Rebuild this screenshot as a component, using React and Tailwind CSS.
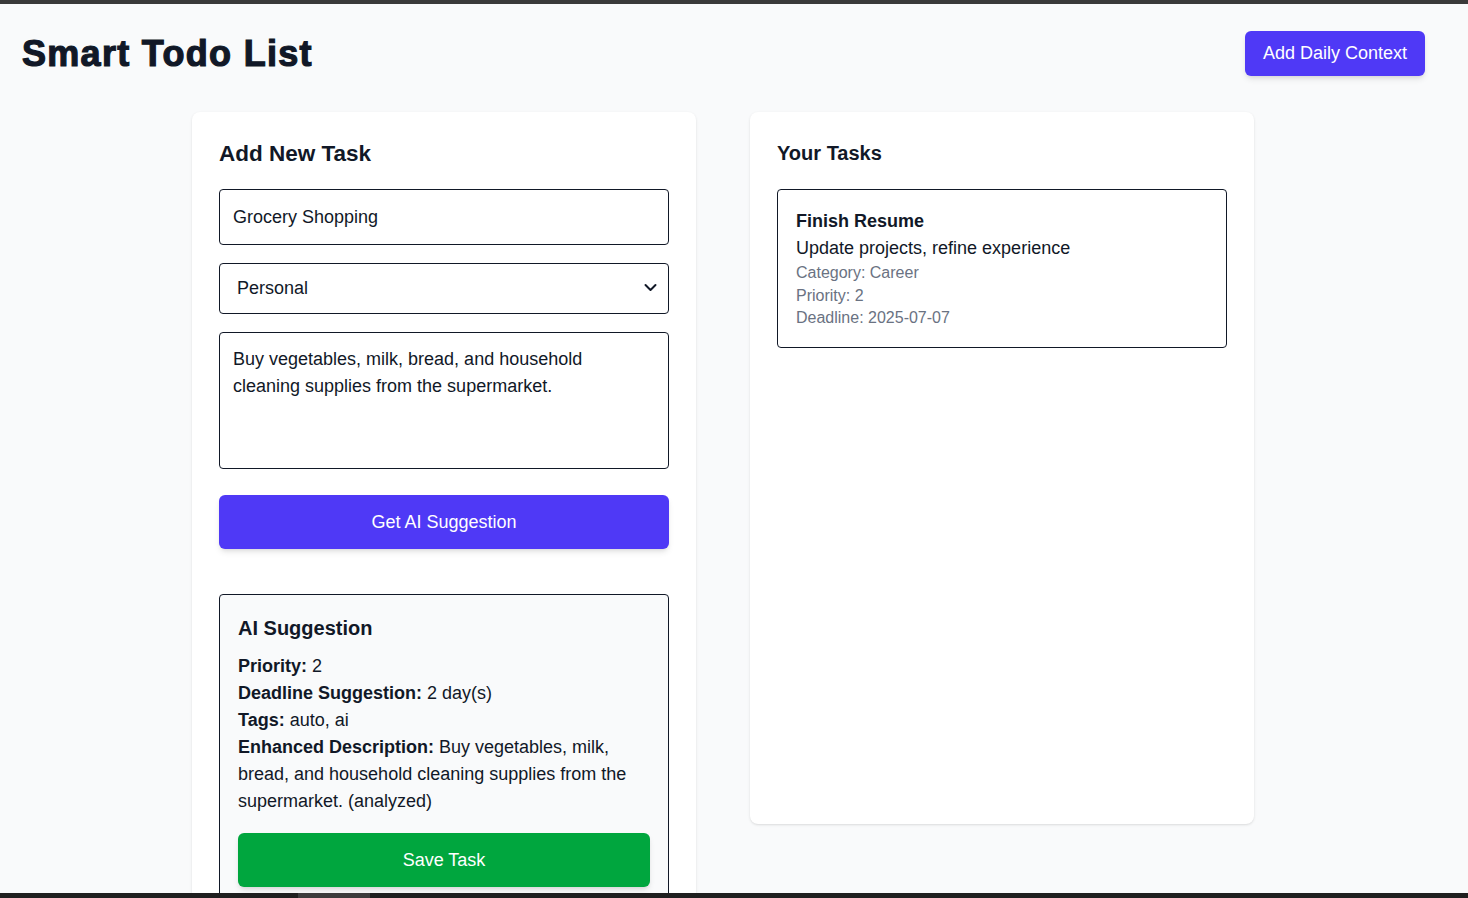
import React, { useState } from "react";

const App = () => {
  const [title, setTitle] = useState("Grocery Shopping");
  const [category, setCategory] = useState("Personal");
  const [description, setDescription] = useState(
    "Buy vegetables, milk, bread, and household cleaning supplies from the supermarket."
  );

  const tasks = [
    {
      title: "Finish Resume",
      description: "Update projects, refine experience",
      category: "Career",
      priority: 2,
      deadline: "2025-07-07",
    },
  ];

  return (
    <div className="min-h-screen bg-[#f9fafb] font-['Liberation_Sans',Arial,sans-serif] text-[#111827]">
      <div className="h-[4px] bg-[#3a3a3a]"></div>

      <header className="flex items-center justify-between pl-[22px] pr-[43px] pt-[27px]">
        <h1 className="text-[36px] leading-[40px] font-bold tracking-[1.3px] [-webkit-text-stroke:1.2px_#111827]">
          Smart Todo List
        </h1>
        <button className="h-[45px] px-[18px] rounded-md bg-[#4f39f6] text-white text-[18px] shadow-md">
          Add Daily Context
        </button>
      </header>

      <main className="flex items-start gap-[54px] ml-[192px] mt-[36px] pb-10">
        {/* add task */}
        <section className="w-[504px] bg-white rounded-lg shadow-sm pt-[26px] px-[27px] pb-6">
          <h2 className="text-[22.5px] leading-[32px] font-bold mb-[19px]">Add New Task</h2>
          <input
            value={title}
            onChange={(e) => setTitle(e.target.value)}
            className="block w-full h-[56px] px-[13px] border border-[#111827] rounded text-[18px] outline-none"
          />
          <div className="relative mt-[18px]">
            <select
              value={category}
              onChange={(e) => setCategory(e.target.value)}
              className="block w-full h-[51px] px-[17px] border border-[#111827] rounded text-[18px] bg-white outline-none appearance-none"
            >
              <option>Personal</option>
              <option>Work</option>
              <option>Career</option>
            </select>
            <svg
              className="absolute right-[12px] top-[20px] pointer-events-none"
              width="13"
              height="9"
              viewBox="0 0 13 9"
              fill="none"
            >
              <path d="M1.5 2l5 5 5-5" stroke="#111827" strokeWidth="2" strokeLinecap="round" strokeLinejoin="round" />
            </svg>
          </div>
          <textarea
            value={description}
            onChange={(e) => setDescription(e.target.value)}
            className="block w-full h-[137px] mt-[18px] pl-[13px] pr-[20px] pt-[13px] pb-[12px] border border-[#111827] rounded text-[18px] leading-[27px] resize-none outline-none"
          />
          <button className="block w-full h-[54px] mt-[26px] rounded-md bg-[#4f39f6] text-white text-[18px] shadow-md">
            Get AI Suggestion
          </button>

          <div className="mt-[45px] border border-[#111827] rounded bg-[#f9fafb] px-[18px] pt-[18px] pb-[18px]">
            <h3 className="text-[20px] leading-[30px] font-bold mb-[10px]">AI Suggestion</h3>
            <div className="text-[18px] leading-[27px]">
              <p><span className="font-bold">Priority:</span> 2</p>
              <p><span className="font-bold">Deadline Suggestion:</span> 2 day(s)</p>
              <p><span className="font-bold">Tags:</span> auto, ai</p>
              <p>
                <span className="font-bold">Enhanced Description:</span> Buy vegetables, milk,
                bread, and household cleaning supplies from the supermarket. (analyzed)
              </p>
            </div>
            <button className="block w-full h-[54px] mt-[18px] rounded-md bg-[#00a63e] text-white text-[18px] shadow-md">
              Save Task
            </button>
          </div>
        </section>

        {/* task list */}
        <section className="w-[504px] h-[712px] bg-white rounded-lg shadow-sm pt-[25px] px-[27px]">
          <h2 className="text-[20px] leading-[32px] font-bold mb-[20px]">Your Tasks</h2>
          <div className="flex flex-col gap-3">
            {tasks.map((task, index) => (
              <div key={index} className="border border-[#111827] rounded px-[18px] pt-[18px] pb-[17px]">
                <p className="text-[18px] leading-[26px] font-bold">{task.title}</p>
                <p className="text-[18px] leading-[28px]">{task.description}</p>
                <p className="text-[16px] leading-[22.5px] text-[#6a7282]">Category: {task.category}</p>
                <p className="text-[16px] leading-[22.5px] text-[#6a7282]">Priority: {task.priority}</p>
                <p className="text-[16px] leading-[22.5px] text-[#6a7282]">Deadline: {task.deadline}</p>
              </div>
            ))}
          </div>
        </section>
      </main>

      <div className="fixed bottom-0 left-0 right-0 h-[5px] bg-[#1f1f1f]">
        <div className="ml-[298px] w-[72px] h-full bg-[#3c3c3c]"></div>
      </div>
    </div>
  );
};

export default App;
